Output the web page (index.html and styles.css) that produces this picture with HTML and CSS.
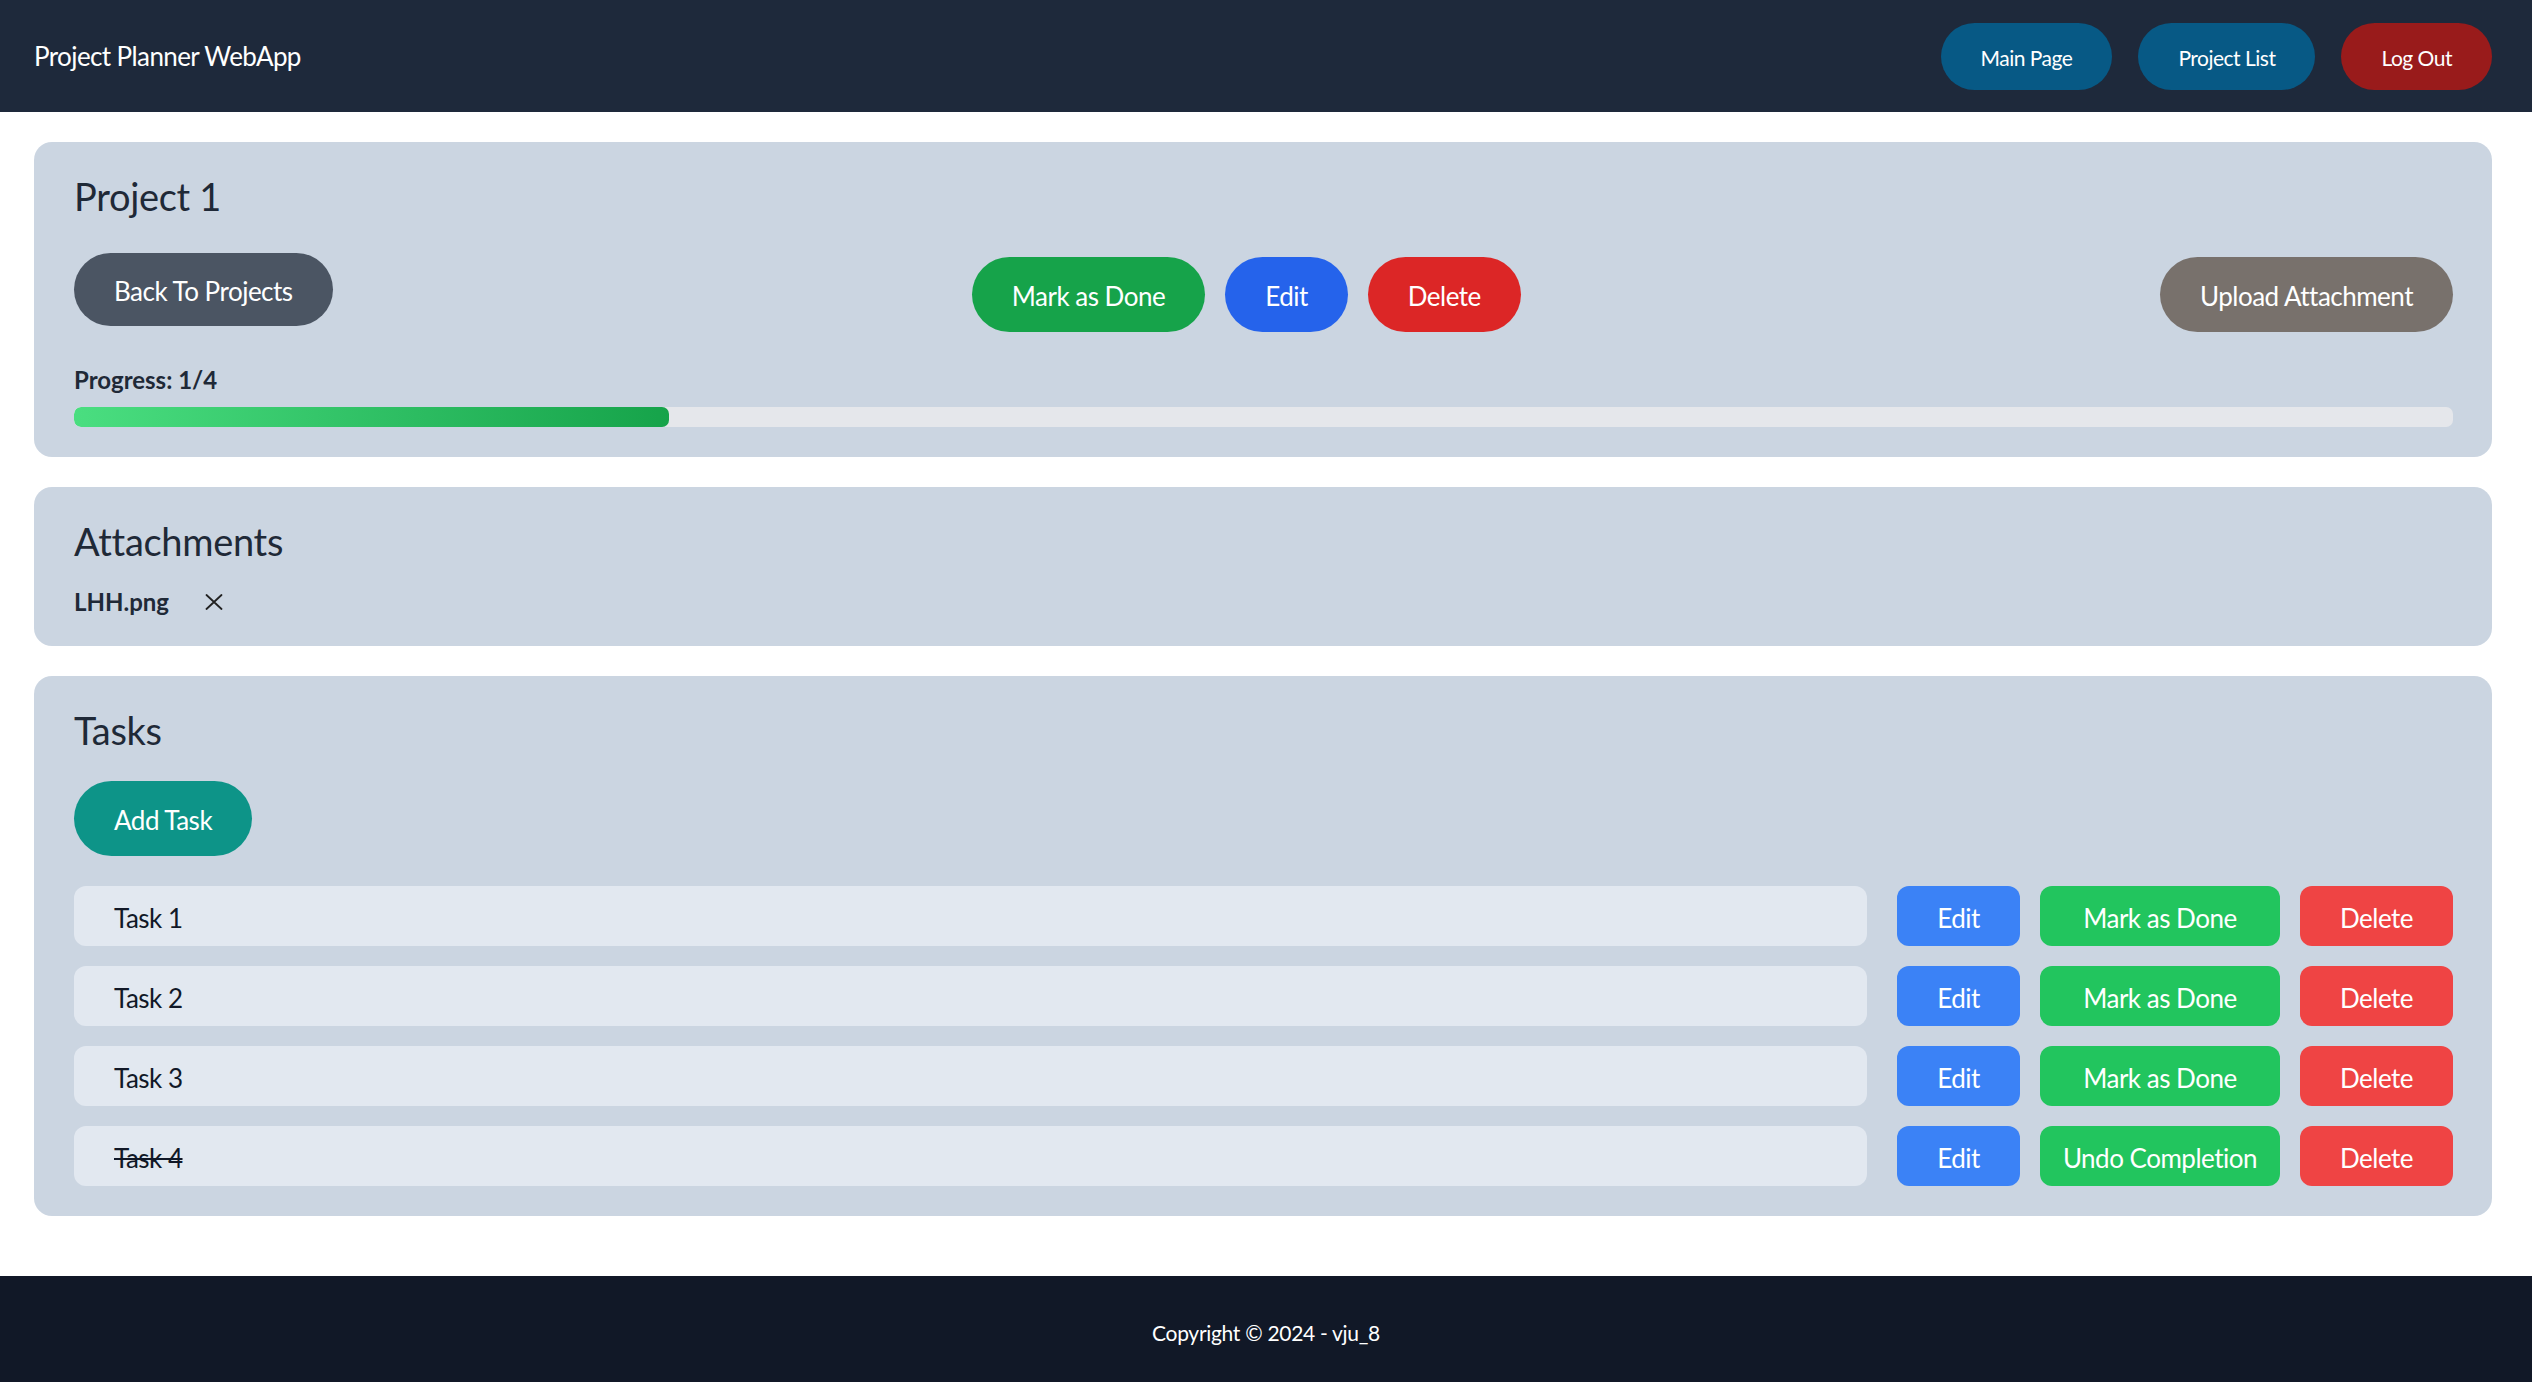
FILE: index.html
```html
<!DOCTYPE html>
<html lang="en">
<head>
<meta charset="utf-8">
<title>Project Planner WebApp</title>
<link rel="stylesheet" href="styles.css">
</head>
<body>
<header class="topbar">
  <div class="brand">Project Planner WebApp</div>
  <nav class="nav">
    <a class="nav-btn nav-blue" href="#">Main Page</a>
    <a class="nav-btn nav-blue" href="#">Project List</a>
    <a class="nav-btn nav-red" href="#">Log Out</a>
  </nav>
</header>

<main class="main">
  <section class="card">
    <h1 class="card-title">Project 1</h1>
    <div class="project-actions">
      <button class="pill pill-back">Back To Projects</button>
      <div class="pill-group">
        <button class="pill pill-green">Mark as Done</button>
        <button class="pill pill-blue">Edit</button>
        <button class="pill pill-red">Delete</button>
      </div>
      <button class="pill pill-stone pill-offset">Upload Attachment</button>
    </div>
    <div class="progress-label">Progress: 1/4</div>
    <div class="progress-track">
      <div class="progress-fill" style="width:25%"></div>
    </div>
  </section>

  <section class="card">
    <h2 class="card-title">Attachments</h2>
    <div class="attachment">
      <span class="attachment-name">LHH.png</span>
      <button class="remove-btn" aria-label="Remove">
        <svg width="18" height="16" viewBox="0 0 18 16"><path d="M1.5 1 L16.5 15 M16.5 1 L1.5 15" stroke="#222" stroke-width="1.8" fill="none" stroke-linecap="round"/></svg>
      </button>
    </div>
  </section>

  <section class="card">
    <h2 class="card-title">Tasks</h2>
    <button class="pill pill-teal add-task">Add Task</button>
    <ul class="task-list">
      <li class="task-row">
        <span class="task-name">Task 1</span>
        <button class="tbtn tbtn-blue">Edit</button>
        <button class="tbtn tbtn-green">Mark as Done</button>
        <button class="tbtn tbtn-red">Delete</button>
      </li>
      <li class="task-row">
        <span class="task-name">Task 2</span>
        <button class="tbtn tbtn-blue">Edit</button>
        <button class="tbtn tbtn-green">Mark as Done</button>
        <button class="tbtn tbtn-red">Delete</button>
      </li>
      <li class="task-row">
        <span class="task-name">Task 3</span>
        <button class="tbtn tbtn-blue">Edit</button>
        <button class="tbtn tbtn-green">Mark as Done</button>
        <button class="tbtn tbtn-red">Delete</button>
      </li>
      <li class="task-row">
        <span class="task-name task-done">Task 4</span>
        <button class="tbtn tbtn-blue">Edit</button>
        <button class="tbtn tbtn-green">Undo Completion</button>
        <button class="tbtn tbtn-red">Delete</button>
      </li>
    </ul>
  </section>
</main>

<footer class="footer">Copyright © 2024 - vju_8</footer>
</body>
</html>
```
FILE: styles.css
```css
* { box-sizing: border-box; }

html, body {
  margin: 0;
  padding: 0;
}

body {
  font-family: Lato, "Open Sans", "Noto Sans", sans-serif;
  color: #1f2937;
  background: #ffffff;
}

button {
  font-family: inherit;
  border: none;
  cursor: pointer;
  color: #ffffff;
}

/* Header */
.topbar {
  height: 112px;
  background: #1e293b;
  display: flex;
  align-items: center;
  justify-content: space-between;
  padding: 0 40px 0 34px;
}

.brand {
  color: #ffffff;
  font-size: 26px;
  letter-spacing: -0.6px;
  line-height: 1;
}

.nav {
  display: flex;
  gap: 26px;
}

.nav-btn {
  height: 67px;
  padding: 2px 40px 0;
  border-radius: 9999px;
  display: flex;
  align-items: center;
  color: #ffffff;
  text-decoration: none;
  font-size: 21px;
  letter-spacing: -0.5px;
}

.nav-blue { background: #075985; }
.nav-red { background: #991b1b; }

/* Main */
.main {
  padding: 30px 40px 60px 34px;
  display: flex;
  flex-direction: column;
  gap: 30px;
}

.card {
  background: #cbd5e1;
  border-radius: 18px;
  padding: 31px 39px 30px 40px;
}

.card-title {
  margin: 0;
  font-size: 38px;
  font-weight: 400;
  line-height: 46px;
  letter-spacing: -0.3px;
  color: #1f2937;
}

.project-actions {
  display: flex;
  justify-content: space-between;
  align-items: flex-start;
  margin-top: 34px;
}

.pill-group {
  display: flex;
  gap: 20px;
  margin-top: 4px;
}

.pill {
  height: 75px;
  padding: 3px 40px 0;
  border-radius: 9999px;
  font-size: 26px;
  letter-spacing: -0.5px;
  line-height: 1;
  white-space: nowrap;
}

.pill-back {
  height: 73px;
  background: #4b5563;
}

.pill-offset { margin-top: 4px; }

.pill-green { background: #16a34a; }
.pill-blue { background: #2563eb; }
.pill-red { background: #dc2626; }
.pill-stone { background: #78716c; }
.pill-teal { background: #0d9488; }

.progress-label {
  margin-top: 33px;
  font-size: 24px;
  font-weight: 700;
  line-height: 29px;
  color: #1f2937;
}

.progress-track {
  margin-top: 13px;
  height: 20px;
  border-radius: 7px;
  background: #e5e7eb;
  overflow: hidden;
}

.progress-fill {
  height: 100%;
  border-radius: 7px;
  background: linear-gradient(to right, #4ade80, #16a34a);
}

/* Attachments */
.attachment {
  margin-top: 23px;
  display: flex;
  align-items: center;
  gap: 36px;
}

.attachment-name {
  font-size: 24px;
  font-weight: 700;
  line-height: 29px;
  color: #1f2937;
}

.remove-btn {
  background: none;
  padding: 0;
  display: flex;
  align-items: center;
}

/* Tasks */
.add-task {
  display: block;
  margin-top: 28px;
}

.task-list {
  list-style: none;
  margin: 30px 0 0;
  padding: 0;
  display: flex;
  flex-direction: column;
  gap: 20px;
}

.task-row {
  display: flex;
  align-items: stretch;
  gap: 20px;
}

.task-name {
  flex: 1;
  height: 60px;
  display: flex;
  align-items: center;
  padding: 3px 0 0 40px;
  margin-right: 10px;
  background: #e2e8f0;
  border-radius: 12px;
  font-size: 26px;
  letter-spacing: -0.5px;
  color: #111827;
}

.task-done { text-decoration: line-through; text-decoration-thickness: 2px; }

.tbtn {
  height: 60px;
  padding: 3px 40px 0;
  border-radius: 12px;
  font-size: 26px;
  letter-spacing: -0.5px;
  white-space: nowrap;
}

.tbtn-blue { background: #3b82f6; }
.tbtn-green { background: #22c55e; width: 240px; padding: 3px 0 0; }
.tbtn-red { background: #ef4444; }

/* Footer */
.footer {
  height: 112px;
  background: #111827;
  color: #ffffff;
  display: flex;
  align-items: center;
  justify-content: center;
  font-size: 21px;
  letter-spacing: -0.3px;
}
```
